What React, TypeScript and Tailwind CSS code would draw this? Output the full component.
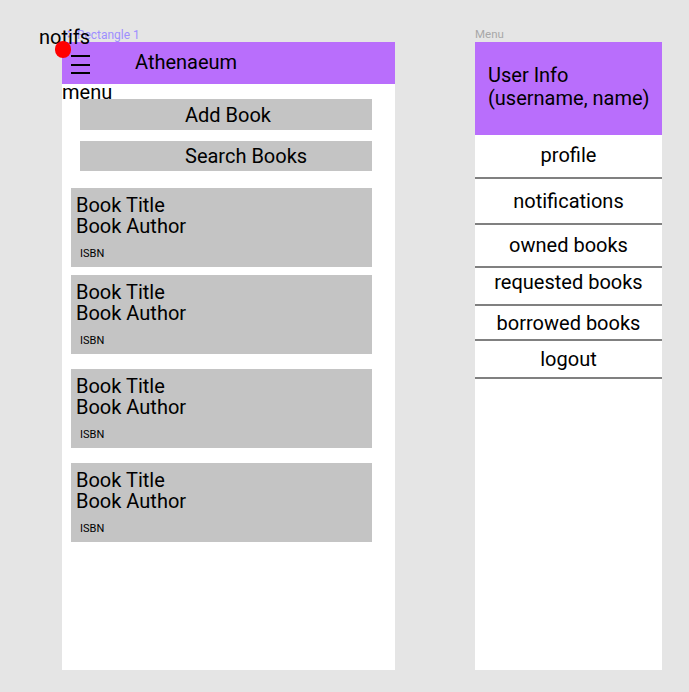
import React from "react";

const font = { fontFamily: "Roboto, 'Noto Sans', sans-serif" };

function Card() {
  return (
    <div className="w-[301px] h-[79px] bg-[#c4c4c4] pt-[7px] pl-[5px] flex flex-col">
      <div className="text-[20px] leading-[21px] text-black">Book Title</div>
      <div className="text-[20px] leading-[21px] text-black">Book Author</div>
      <div className="text-[11px] leading-[13px] text-black pl-[4px] mt-[10px]">ISBN</div>
    </div>
  );
}

const menuRows: { label: string; h: string; extra?: string }[] = [
  { label: "profile", h: "h-[42px]", extra: "pb-[2px]" },
  { label: "notifications", h: "h-[44px]" },
  { label: "owned books", h: "h-[41px]", extra: "pb-[1px]" },
  { label: "requested books", h: "h-[36px]", extra: "pb-[8px]" },
  { label: "borrowed books", h: "h-[33px]" },
  { label: "logout", h: "h-[36px]" },
];

export default function App() {
  return (
    <div className="w-[689px] h-[692px] bg-[#e5e5e5] relative overflow-hidden" style={font}>
      <div className="flex pl-[62px] pt-[28px] gap-[80px]">
        {/* Left column */}
        <div className="flex flex-col w-[333px]">
          <div className="h-[14px] flex items-center gap-[4px] pl-[3px] text-[12px] text-[#9e8fff] leading-none">
            <svg width="8" height="8" viewBox="0 0 8 8" className="-mt-[3px]">
              <path d="M4 0 L5.5 1.5 L4 3 L2.5 1.5 Z M4 5 L5.5 6.5 L4 8 L2.5 6.5 Z M0 4 L1.5 2.5 L3 4 L1.5 5.5 Z M5 4 L6.5 2.5 L8 4 L6.5 5.5 Z" fill="#9e8fff" />
            </svg>
            <span className="-mt-[1px]">Rectangle 1</span>
          </div>
          <div className="h-[628px] bg-white flex flex-col">
            <div className="h-[42px] bg-[#b96efc] flex items-center">
              <div className="w-[19px] ml-[9px] flex flex-col gap-[6.5px] mt-[3px]">
                <div className="h-[2px] bg-black" />
                <div className="h-[2px] bg-black" />
                <div className="h-[2px] bg-black" />
              </div>
              <div className="ml-[45px] text-[20px] text-black -mt-[3px]">Athenaeum</div>
            </div>
            <div className="pl-[18px] pt-[15px] flex flex-col gap-[11px]">
              <div className="w-[292px] h-[31px] bg-[#c4c4c4] flex items-center pl-[105px] text-[20px] text-black">
                Add Book
              </div>
              <div className="w-[292px] h-[30px] bg-[#c4c4c4] flex items-center pl-[105px] text-[20px] text-black">
                Search Books
              </div>
            </div>
            <div className="pl-[9px] pt-[17px] flex flex-col">
              <Card />
              <div className="h-[8px]" />
              <Card />
              <div className="h-[15px]" />
              <Card />
              <div className="h-[15px]" />
              <Card />
            </div>
          </div>
        </div>

        {/* Right column */}
        <div className="flex flex-col w-[187px]">
          <div className="h-[14px] text-[11.5px] leading-none text-[#a8a8a8] pt-[1px]">Menu</div>
          <div className="h-[628px] bg-white flex flex-col">
            <div className="h-[93px] bg-[#b96efc] flex items-center pl-[13px] pb-[4px]">
              <div className="text-[20px] leading-[23px] text-black">
                User Info
                <br />
                (username, name)
              </div>
            </div>
            {menuRows.map((r) => (
              <div key={r.label} className="flex flex-col">
                <div className={`${r.h} flex items-center justify-center text-[20px] text-black ${r.extra ?? ""}`}>
                  {r.label}
                </div>
                <div className="h-[2px] bg-[#808080]" />
              </div>
            ))}
          </div>
        </div>
      </div>

      {/* overlays */}
      <div className="absolute left-[39px] top-[25px] text-[20px] leading-[24px] text-black">notifs</div>
      <div className="absolute left-[55px] top-[41px] w-[16px] h-[17px] rounded-full bg-[#ff0000]" />
      <div className="absolute left-[62px] top-[80px] text-[20px] leading-[24px] text-black">menu</div>
    </div>
  );
}
